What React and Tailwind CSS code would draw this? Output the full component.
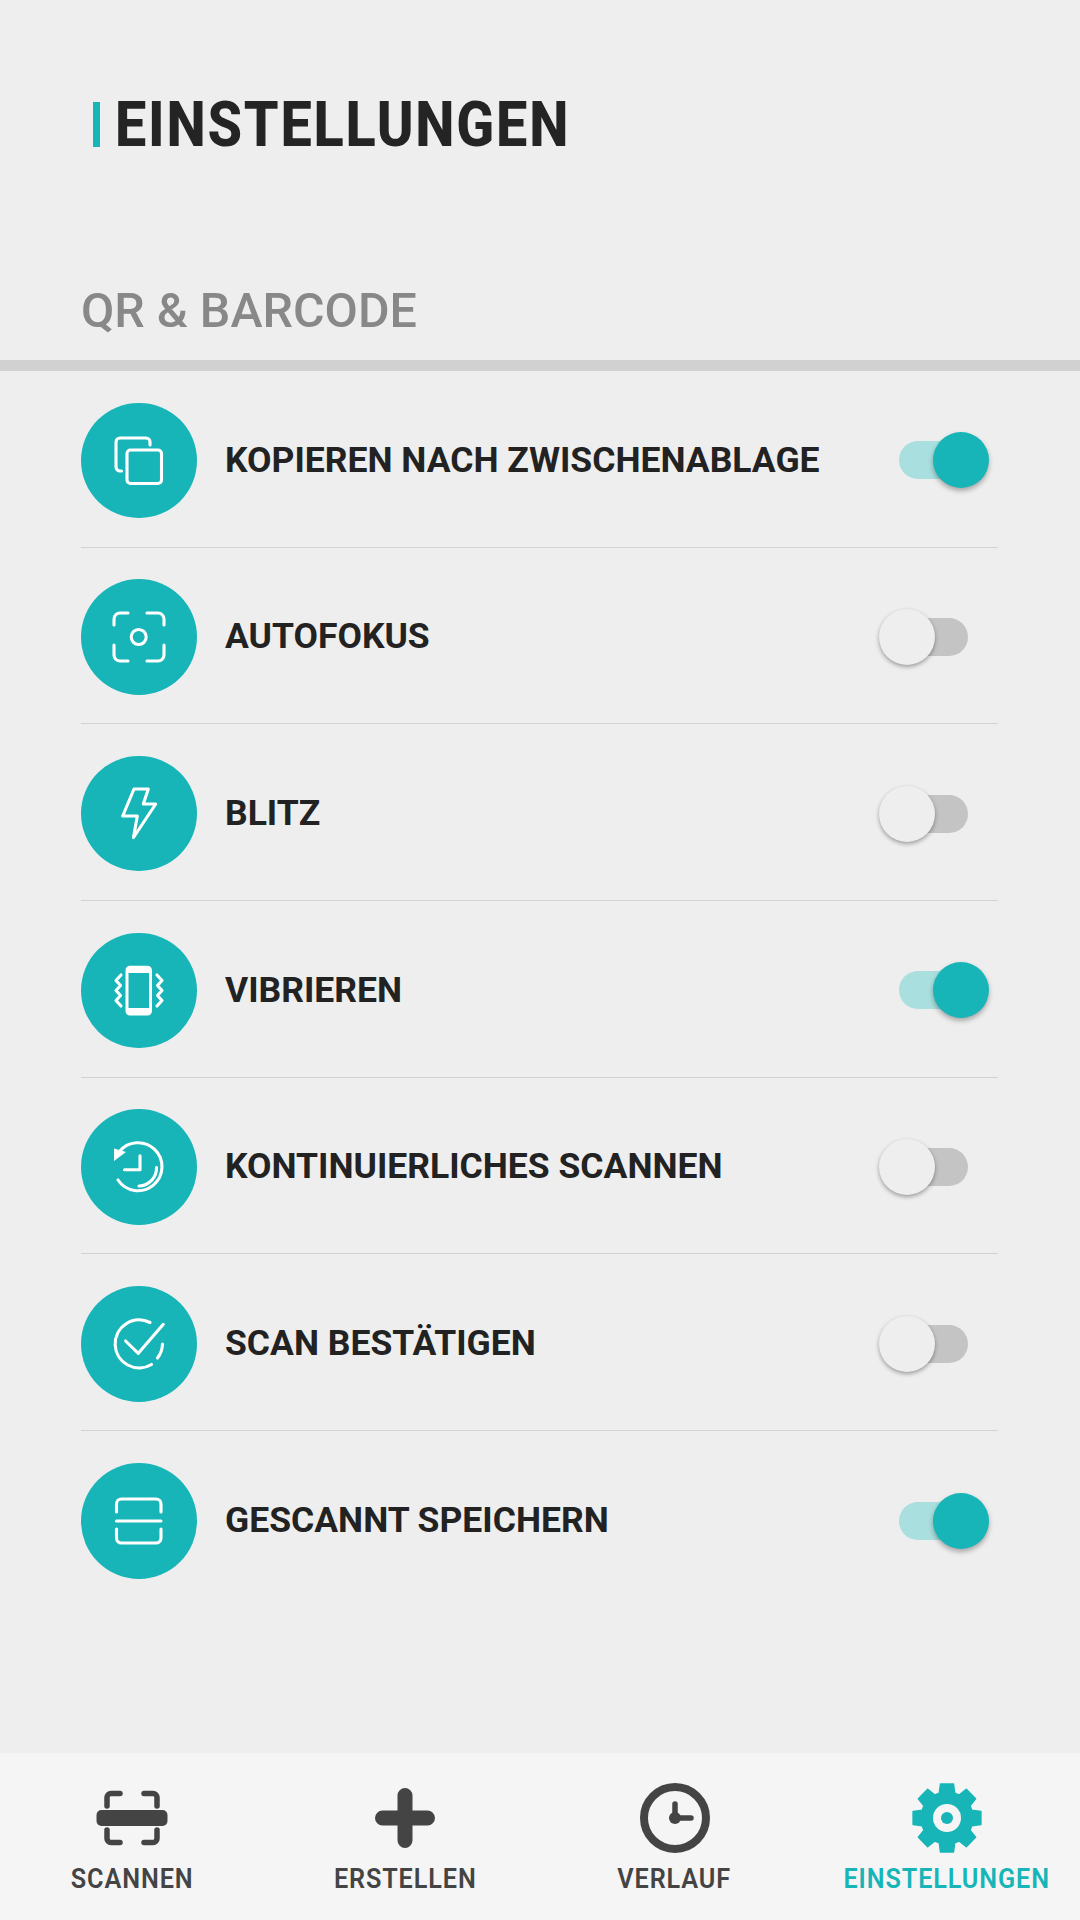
const T = "#17b5b8";
const sw = { fill: "none", stroke: "#fff", strokeWidth: 3.1, strokeLinecap: "round", strokeLinejoin: "round" };

const Icons = {
  copy: (
    <g {...sw}>
      <rect x="46" y="47" width="34.500" height="33.500" rx="3.500" />
      <path d="M40.500 68h-1.500a4 4 0 0 1-4-4V39a4 4 0 0 1 4-4h26a4 4 0 0 1 4 4v3" />
    </g>
  ),
  focus: (
    <g {...sw}>
      <path d="M33 46V40a6 6 0 0 1 6-6h8M66 34h11a6 6 0 0 1 6 6v6M83 66v10a6 6 0 0 1-6 6H66M47 82H39a6 6 0 0 1-6-6V66" />
      <circle cx="57.700" cy="58" r="7.500" />
    </g>
  ),
  bolt: (
    <g {...sw}>
      <path d="M53 33H67.300L62.300 48H74.700L52.500 81.500L56.300 60H41.700Z" />
    </g>
  ),
  vibrate: (
    <g>
      <path fillRule="evenodd" fill="#fff" d="M49 32.700H66.500a4.500 4.500 0 0 1 4.500 4.500V78a4.500 4.500 0 0 1-4.500 4.500H49a4.500 4.500 0 0 1-4.500-4.500V37.200a4.500 4.500 0 0 1 4.500-4.500ZM47.500 40V75H68V40Z" />
      <path {...sw} d="M40 42L35 47.500L39.500 52.500L35 57.500L39.500 62.500L35 67.500L40 73M76 42L81 47.500L76.500 52.500L81 57.500L76.500 62.500L81 67.500L76 73" />
    </g>
  ),
  history: (
    <g>
      <path {...sw} d="M38 43A24 24 0 1 1 37 71" />
      <path {...sw} d="M75.500 58.500A18 18 0 0 1 58 77M59 46.700V60.700H43.500" />
      <path fill="#fff" d="M33 39.500L45 43L33 52Z" />
    </g>
  ),
  check: (
    <g {...sw}>
      <path d="M69 36.500A24 24 0 1 0 70.500 78.500M81.500 58A24 24 0 0 1 76.500 72" />
      <path d="M44.600 55L57.300 67.300L82.300 38.300" />
    </g>
  ),
  scan: (
    <g {...sw}>
      <path d="M35.500 49V41a5 5 0 0 1 5-5H75a5 5 0 0 1 5 5v8M35.500 66v9a5 5 0 0 0 5 5H75a5 5 0 0 0 5-5v-9M35.500 58H80" />
    </g>
  ),
};

const rows = [
  ["copy", "KOPIEREN NACH ZWISCHENABLAGE", true],
  ["focus", "AUTOFOKUS", false],
  ["bolt", "BLITZ", false],
  ["vibrate", "VIBRIEREN", true],
  ["history", "KONTINUIERLICHES SCANNEN", false],
  ["check", "SCAN BESTÄTIGEN", false],
  ["scan", "GESCANNT SPEICHERN", true],
];

function Toggle({ on }) {
  return (
    <div className={"relative h-[38px] w-[69px] rounded-full " + (on ? "bg-[#a9dfde]" : "bg-[#c4c4c4]")}>
      {on ? (
        <div className="absolute right-[-21px] top-[-9px] h-[56px] w-[56px] rounded-full bg-[#17b5b8] shadow-[0_3px_5px_rgba(0,0,0,0.3)]" />
      ) : (
        <div className="absolute left-[-20px] top-[-9px] h-[56px] w-[56px] rounded-full bg-[#eeeeee] shadow-[0_2px_4px_rgba(0,0,0,0.35)]" />
      )}
    </div>
  );
}

function Gear() {
  const pts = [];
  for (let i = 0; i < 8; i++) {
    const a = (i * Math.PI) / 4 - Math.PI / 2;
    const at = (r, d) => {
      const x = 36 + r * Math.cos(a + d);
      const y = 36 + r * Math.sin(a + d);
      return x.toFixed(1) + " " + y.toFixed(1);
    };
    pts.push(at(26, -0.3), at(34.500, -0.19), at(34.500, 0.19), at(26, 0.3));
  }
  return (
    <svg width="72" height="72" viewBox="0 0 72 72">
      <path d={"M" + pts.join("L") + "Z"} fill={T} stroke={T} strokeWidth="1.500" strokeLinejoin="round" />
      <circle cx="36" cy="36" r="14" fill="#f5f5f5" />
      <circle cx="36" cy="36" r="6" fill={T} />
    </svg>
  );
}

const nav = [
  {
    label: "SCANNEN",
    cls: "ml-[32px]",
    icon: (
      <svg width="72" height="72" viewBox="0 0 72 72" fill="none" stroke="#444" strokeLinecap="round" strokeLinejoin="round">
        <path strokeWidth="5.500" d="M24 11.500H15a4 4 0 0 0-4 4V24M48 11.500H57a4 4 0 0 1 4 4V24M24 60.500H15a4 4 0 0 1-4-4V48M48 60.500H57a4 4 0 0 0 4-4V48" />
        <rect x="0.500" y="28" width="71" height="16" rx="5" fill="#444" stroke="none" />
      </svg>
    ),
  },
  {
    label: "ERSTELLEN",
    cls: "ml-[73px]",
    icon: (
      <svg width="72" height="72" viewBox="0 0 72 72" fill="none" stroke="#444" strokeWidth="15" strokeLinecap="round">
        <path d="M36 13.500V58.500M13.500 36H58.500" />
      </svg>
    ),
  },
  {
    label: "VERLAUF",
    cls: "ml-[69.500px]",
    icon: (
      <svg width="72" height="72" viewBox="0 0 72 72" fill="none" stroke="#444" strokeLinecap="round">
        <circle cx="36" cy="36" r="31" strokeWidth="8" />
        <path strokeWidth="5.500" d="M36 22V36H52" />
        <circle cx="36" cy="36" r="6" fill="#444" stroke="none" />
      </svg>
    ),
  },
  { label: "EINSTELLUNGEN", cls: "ml-[72px]", active: true, icon: <Gear /> },
];

export default function App() {
  return (
    <div className="flex h-[1920px] w-[1080px] flex-col overflow-hidden bg-[#eeeeee] font-['Roboto',sans-serif]">
      <div className="flex h-[360px] flex-col">
        <div className="mt-[85px] flex h-[79px] items-center pl-[93px]">
          <div className="h-[45px] w-[7px] bg-[#17b5b8]" />
          <h1 className="ml-[15px] origin-left scale-x-[0.885] text-[63px] font-extrabold leading-none tracking-[2px] text-[#242424]">EINSTELLUNGEN</h1>
        </div>
        <div className="mt-[117px] pl-[81px] text-[48.400px] font-medium leading-[60px] text-[#888888]">QR &amp; BARCODE</div>
      </div>
      <div className="h-[11px] bg-[#d1d1d1]" />
      <div className="flex-1">
        {rows.map(([icon, label, on], i) => (
          <div key={label} className={"ml-[81px] mr-[82px] flex h-[176.700px] items-center pt-[3px] " + (i < 6 ? "border-b border-[#d2d2d2]" : "")}>
            <div className="h-[115.500px] w-[116px] shrink-0 rounded-full bg-[#17b5b8]">
              <svg width="116" height="116" viewBox="0 0 116 116">{Icons[icon]}</svg>
            </div>
            <div className="ml-[28px] flex-1 text-[35.500px] font-bold text-[#222222]">{label}</div>
            <div className="mr-[30px]"><Toggle on={on} /></div>
          </div>
        ))}
      </div>
      <div className="flex h-[167px] bg-[#f5f5f5]">
        {nav.map((n) => (
          <div key={n.label} className={"flex w-[200px] shrink-0 flex-col items-center pt-[29px] " + n.cls}>
            {n.icon}
            <div className={"mt-[8px] scale-x-90 whitespace-nowrap text-[28px] font-semibold leading-[34px] tracking-[1px] " + (n.active ? "text-[#17b5b8]" : "text-[#444444]")}>{n.label}</div>
          </div>
        ))}
      </div>
    </div>
  );
}
